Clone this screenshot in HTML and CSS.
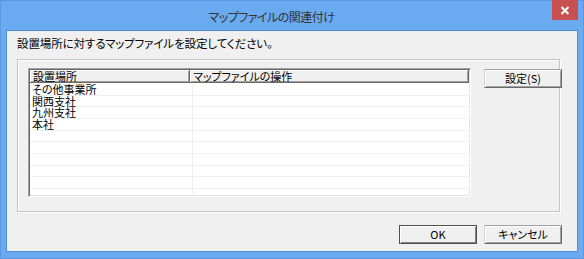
FILE: index.html
```html
<!DOCTYPE html>
<html lang="ja">
<head>
    <meta charset="UTF-8">
    <title>マップファイルの関連付け</title>
    <link rel="stylesheet" href="styles.css">
</head>
<body>
<div class="window">
    <div class="titlebar">
        <div class="title">マップファイルの関連付け</div>
        <div class="close">
            <svg width="10" height="9" viewBox="0 0 10 9"><path d="M1.5 1 L8.5 8 M8.5 1 L1.5 8" stroke="#ffffff" stroke-width="2"/></svg>
        </div>
    </div>
    <div class="client">
        <p class="prompt">設置場所に対するマップファイルを設定してください。</p>
        <div class="group">
            <div class="list">
                <div class="list-head">
                    <div class="col-a">設置場所</div>
                    <div class="col-b">マップファイルの操作</div>
                </div>
                <div class="list-body">
                    <div class="row"><div class="col-a">その他事業所</div><div class="col-b"></div></div>
                    <div class="row"><div class="col-a">関西支社</div><div class="col-b"></div></div>
                    <div class="row"><div class="col-a">九州支社</div><div class="col-b"></div></div>
                    <div class="row"><div class="col-a">本社</div><div class="col-b"></div></div>
                    <div class="row"><div class="col-a"></div><div class="col-b"></div></div>
                    <div class="row"><div class="col-a"></div><div class="col-b"></div></div>
                    <div class="row"><div class="col-a"></div><div class="col-b"></div></div>
                    <div class="row"><div class="col-a"></div><div class="col-b"></div></div>
                    <div class="row"><div class="col-a"></div><div class="col-b"></div></div>
                    <div class="row"><div class="col-a"></div><div class="col-b"></div></div>
                </div>
            </div>
            <button class="btn btn-side">設定(S)</button>
        </div>
        <div class="actions">
            <button class="btn btn-default">OK</button>
            <button class="btn">キャンセル</button>
        </div>
    </div>
</div>
</body>
</html>
```

FILE: styles.css
```css
body {
    margin: 0;
    width: 584px;
    height: 259px;
    overflow: hidden;
    font-family: "Noto Sans CJK JP", "Liberation Sans", sans-serif;
    font-feature-settings: "palt";
    color: #000000;
}
.window {
    height: 259px;
    box-sizing: border-box;
    background-color: #69aaf0;
    border: 1px solid #5b98de;
    display: flex;
    flex-direction: column;
}
.titlebar {
    height: 29px;
    display: flex;
    align-items: flex-start;
}
.title {
    flex: 1;
    text-align: center;
    font-size: 12px;
    letter-spacing: -0.5px;
    line-height: 31px;
    padding-right: 10px;
    color: #333333;
}
.close {
    width: 26px;
    height: 20px;
    margin-top: -1px;
    margin-right: 5px;
    background-color: #c75050;
    display: flex;
    align-items: center;
    justify-content: center;
}
.client {
    flex: 1;
    margin: 0 5px 6px;
    border: 1px solid #4f8fd6;
    background-color: #f0f0f0;
}
.prompt {
    margin: 0;
    padding: 6px 0 0 10px;
    font-size: 11.5px;
    letter-spacing: -0.1px;
    line-height: 13px;
}
.group {
    height: 153px;
    box-sizing: border-box;
    margin: 9px 17px 0 10px;
    padding: 8px 0 0 10px;
    border: 1px solid #c4c4c4;
    box-shadow: inset 1px 1px #ffffff, 1px 1px #ffffff;
    display: flex;
    align-items: flex-start;
}
.list {
    flex-shrink: 0;
    width: 443px;
    height: 129px;
    box-sizing: border-box;
    padding: 1px;
    background-color: #ffffff;
    border: 1px solid;
    border-color: #a0a0a0 #ffffff #ffffff #a0a0a0;
    box-shadow: inset 1px 1px #696969, inset -1px -1px #e3e3e3;
    overflow: hidden;
    font-size: 11px;
}
.list-head {
    display: flex;
    height: 13px;
}
.list-head div {
    box-sizing: border-box;
    height: 13px;
    padding-left: 3px;
    line-height: 12px;
    background-color: #f0f0f0;
    border-right: 1px solid #696969;
    border-bottom: 1px solid #696969;
    box-shadow: inset 1px 1px #ffffff, inset -1px -1px #a0a0a0;
}
.col-a {
    width: 160px;
    flex-shrink: 0;
}
.col-b {
    flex: 1;
}
.list-body {
    padding-top: 1px;
}
.row {
    display: flex;
    height: 11.66px;
    box-sizing: border-box;
    border-bottom: 1px solid #f0f0f0;
    line-height: 10px;
}
.row .col-a {
    padding-left: 2px;
    border-right: 1px solid #f0f0f0;
}
.btn {
    flex-shrink: 0;
    box-sizing: border-box;
    width: 78px;
    height: 19px;
    padding: 0;
    font-family: "Noto Sans CJK JP", "Liberation Sans", sans-serif;
    font-feature-settings: "palt";
    font-size: 11px;
    line-height: 15px;
    color: #000000;
    background-color: #f0f0f0;
    border: 1px solid;
    border-color: #a0a0a0 #696969 #696969 #d4d4d4;
    box-shadow: inset 1px 1px #ffffff, inset -1px -1px #a0a0a0;
}
.btn-side {
    margin-top: 1px;
    margin-left: 13px;
    margin-right: -3px;
}
.btn-default {
    border-color: #505050;
    box-shadow: inset 1px 1px #ffffff, inset -1px -1px #808080;
}
.actions {
    display: flex;
    justify-content: flex-end;
    gap: 7px;
    margin-top: 13px;
    padding-right: 15px;
}
```
